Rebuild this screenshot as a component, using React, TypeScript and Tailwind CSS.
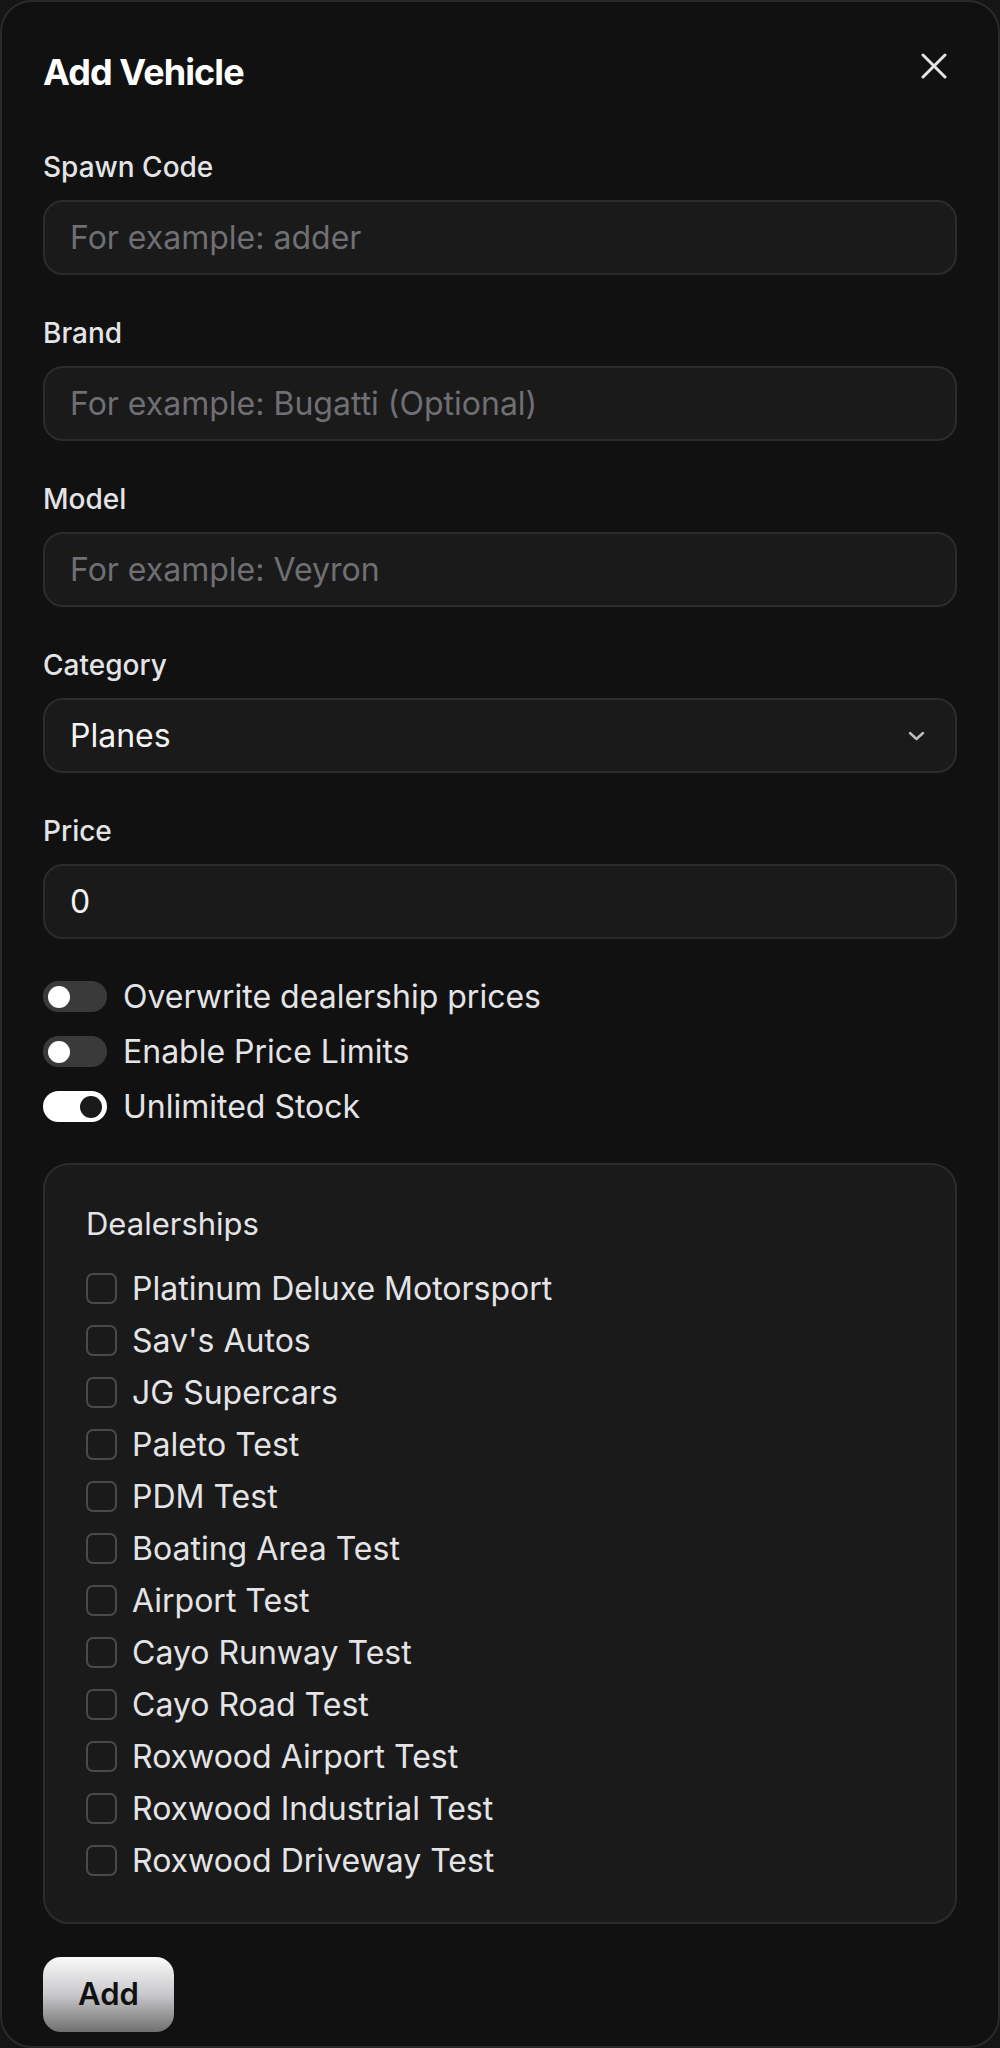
import * as React from "react";

const dealerships = [
    "Platinum Deluxe Motorsport",
    "Sav's Autos",
    "JG Supercars",
    "Paleto Test",
    "PDM Test",
    "Boating Area Test",
    "Airport Test",
    "Cayo Runway Test",
    "Cayo Road Test",
    "Roxwood Airport Test",
    "Roxwood Industrial Test",
    "Roxwood Driveway Test",
];

function Field({ label, children }: { label: string; children: React.ReactNode }) {
    return (
        <div className="flex flex-col">
            <label className="mb-[13px] text-[28px] leading-[39px] font-medium text-[#e4e4e7]">{label}</label>
            {children}
        </div>
    );
}

function TextInput({ placeholder, value }: { placeholder?: string; value?: string }) {
    return (
        <input
            className="h-[75px] w-full rounded-[20px] border-2 border-[#2c2c2c] bg-[#1a1a1a] px-[25px] text-[32px] text-[#f4f4f5] placeholder:text-[#6f6f74] outline-none"
            placeholder={placeholder}
            defaultValue={value}
        />
    );
}

function Toggle({ label, checked }: { label: string; checked?: boolean }) {
    return (
        <div className="flex h-[31px] items-center gap-[16px]">
            <div
                className={
                    checked
                        ? "flex h-[31px] w-[64px] items-center justify-end rounded-full bg-white px-[5px]"
                        : "flex h-[31px] w-[64px] items-center justify-start rounded-full bg-[#3a3a3a] px-[5px]"
                }
            >
                <div className={checked ? "h-[22px] w-[22px] rounded-full bg-[#1a1a1a]" : "h-[22px] w-[22px] rounded-full bg-white"} />
            </div>
            <span className="text-[32px] leading-none text-[#e4e4e7]">{label}</span>
        </div>
    );
}

export default function App() {
    return (
        <div className="min-h-[2048px] w-full bg-[#151515] font-['Inter',sans-serif]">
            <div className="flex h-[2048px] flex-col rounded-[32px] border-2 border-[#2a2a2a] bg-[#111111] px-[41px] pt-[40px]">
                {/* header */}
                <div className="flex h-[60px] items-center justify-between">
                    <h2 className="text-[36px] font-bold tracking-[-0.025em] text-white">Add Vehicle</h2>
                    <button className="mb-[12px] mr-[10px] text-[#e4e4e7]" aria-label="Close">
                        <svg width="26" height="26" viewBox="0 0 26 26" fill="none" stroke="currentColor" strokeWidth="3" strokeLinecap="round">
                            <path d="M2 2 24 24" />
                            <path d="M24 2 2 24" />
                        </svg>
                    </button>
                </div>

                <div className="mt-[46px] flex flex-col gap-[39px]">
                    <Field label="Spawn Code">
                        <TextInput placeholder="For example: adder" />
                    </Field>
                    <Field label="Brand">
                        <TextInput placeholder="For example: Bugatti (Optional)" />
                    </Field>
                    <Field label="Model">
                        <TextInput placeholder="For example: Veyron" />
                    </Field>
                    <Field label="Category">
                        <div className="flex h-[75px] w-full items-center justify-between rounded-[20px] border-2 border-[#2c2c2c] bg-[#1a1a1a] pl-[25px] pr-[30px]">
                            <span className="text-[32px] text-[#f4f4f5]">Planes</span>
                            <svg width="17" height="10" viewBox="0 0 17 10" fill="none" stroke="#bdbdbd" strokeWidth="2.5" strokeLinecap="round" strokeLinejoin="round">
                                <path d="M2 2 8.5 8 15 2" />
                            </svg>
                        </div>
                    </Field>
                    <Field label="Price">
                        <TextInput value="0" />
                    </Field>
                </div>

                <div className="mt-[42px] flex flex-col gap-[24px]">
                    <Toggle label="Overwrite dealership prices" />
                    <Toggle label="Enable Price Limits" />
                    <Toggle label="Unlimited Stock" checked />
                </div>

                <div className="mt-[41px] rounded-[26px] border-2 border-[#2c2c2c] bg-[#1a1a1a] px-[41px] pb-[46px] pt-[38px]">
                    <h3 className="mb-[28px] text-[31px] leading-[42px] text-[#e4e4e7]">Dealerships</h3>
                    <div className="flex flex-col gap-[21px]">
                        {dealerships.map((name) => (
                            <label key={name} className="flex h-[31px] items-center gap-[15px]">
                                <span className="h-[31px] w-[31px] shrink-0 rounded-[7px] border-2 border-[#4a4a4d]" />
                                <span className="text-[32px] leading-none text-[#e4e4e7]">{name}</span>
                            </label>
                        ))}
                    </div>
                </div>

                <div className="mt-[33px]">
                    <button className="h-[75px] w-[131px] rounded-[18px] bg-gradient-to-b from-[#fafafa] via-[#c9c9cc] to-[#707070] text-[31px] font-semibold text-[#111111]">
                        Add
                    </button>
                </div>
            </div>
        </div>
    );
}
